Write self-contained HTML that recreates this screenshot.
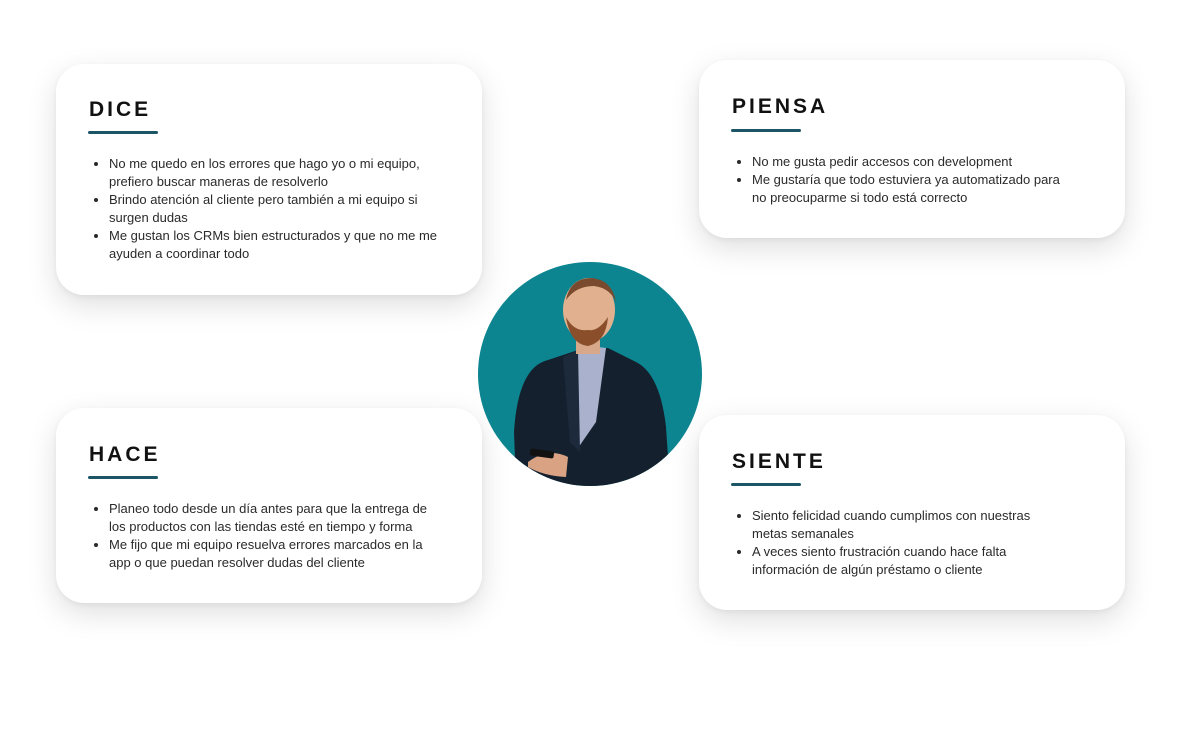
<!DOCTYPE html><html><head><meta charset="utf-8"><style>
body{margin:0;width:1182px;height:748px;background:#fff;position:relative;overflow:hidden;font-family:"Liberation Sans",sans-serif}
.card{position:absolute;background:#fff;border-radius:28px;box-shadow:0 10px 30px rgba(0,0,0,.13),0 2px 6px rgba(0,0,0,.05);box-sizing:border-box;padding-left:32px}
h2{margin:0;position:absolute;left:33px;font-size:21px;letter-spacing:3px;font-weight:bold;color:#111}
.ul{position:absolute;left:32px;width:70px;height:3px;background:#1b5566;border-radius:2px}
ul{position:absolute;left:21px;margin:0;padding-left:32px;font-size:13px;line-height:18px;color:#2a2a2a;width:332px}
.r ul{width:312px}
</style></head><body>
<div class="card" style="left:56px;top:64px;width:426px;height:231px">
<h2 style="top:34px">DICE</h2><div class="ul" style="top:67px"></div>
<ul style="top:91px"><li>No me quedo en los errores que hago yo o mi equipo, prefiero buscar maneras de resolverlo</li><li>Brindo atención al cliente pero también a mi equipo si surgen dudas</li><li>Me gustan los CRMs bien estructurados y que no me me ayuden a coordinar todo</li></ul></div>
<div class="card r" style="left:699px;top:60px;width:426px;height:178px">
<h2 style="top:35px">PIENSA</h2><div class="ul" style="top:69px"></div>
<ul style="top:93px"><li>No me gusta pedir accesos con development</li><li>Me gustaría que todo estuviera ya automatizado para no preocuparme si todo está correcto</li></ul></div>
<div class="card" style="left:56px;top:408px;width:426px;height:195px">
<h2 style="top:35px">HACE</h2><div class="ul" style="top:68px"></div>
<ul style="top:92px"><li>Planeo todo desde un día antes para que la entrega de los productos con las tiendas esté en tiempo y forma</li><li>Me fijo que mi equipo resuelva errores marcados en la app o que puedan resolver dudas del cliente</li></ul></div>
<div class="card r" style="left:699px;top:415px;width:426px;height:195px">
<h2 style="top:35px">SIENTE</h2><div class="ul" style="top:68px"></div>
<ul style="top:92px"><li>Siento felicidad cuando cumplimos con nuestras metas semanales</li><li>A veces siento frustración cuando hace falta información de algún préstamo o cliente</li></ul></div>
<svg style="position:absolute;left:478px;top:262px" width="224" height="224" viewBox="0 0 224 224">
<defs><clipPath id="c"><circle cx="112" cy="112" r="112"/></clipPath></defs>
<g clip-path="url(#c)">
<rect width="224" height="224" fill="#0c8590"/>
<path d="M38 224 L36 170 Q40 105 70 98 L100 88 L130 86 L158 100 Q182 112 188 165 L192 224Z" fill="#15202e"/>
<path d="M92 92 L112 84 L128 86 L118 160 L100 186 Z" fill="#a9b1cc"/>
<path d="M85 95 L100 88 L102 190 L92 180Z" fill="#1c2a3c"/>
<rect x="98" y="62" width="24" height="30" fill="#d8a88a"/>
<ellipse cx="111" cy="48" rx="26" ry="32" fill="#e0b08f"/>
<path d="M88 55 Q92 82 110 84 Q128 80 130 55 Q120 70 110 68 Q96 70 88 55Z" fill="#8a4f2a"/>
<path d="M88 38 Q92 16 114 16 Q134 18 138 40 Q132 26 116 24 Q98 24 88 38Z" fill="#7a4a2e"/>
<path d="M50 200 Q70 185 90 195 L88 215 Q66 214 50 205Z" fill="#d9a283"/>
<rect x="52" y="188" width="24" height="7" rx="2" fill="#111" transform="rotate(8 64 191)"/>
</g></svg>
</body></html>
